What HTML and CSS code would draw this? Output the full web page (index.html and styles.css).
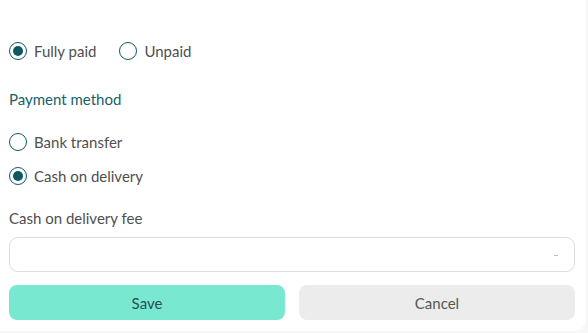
FILE: index.html
```html
<!DOCTYPE html>
<html>
<head>
<meta charset="utf-8">
<link rel="stylesheet" href="styles.css">
</head>
<body>
<div class="card">
  <div class="row-inline">
    <label class="radio"><span class="dot checked"></span><span class="txt">Fully paid</span></label>
    <label class="radio"><span class="dot"></span><span class="txt">Unpaid</span></label>
  </div>
  <div class="section">Payment method</div>
  <label class="radio stack"><span class="dot"></span><span class="txt">Bank transfer</span></label>
  <label class="radio stack second"><span class="dot checked"></span><span class="txt">Cash on delivery</span></label>
  <div class="field-label">Cash on delivery fee</div>
  <div class="input"><span class="dash"></span></div>
  <div class="buttons">
    <button class="btn save">Save</button>
    <button class="btn cancel">Cancel</button>
  </div>
</div>
</body>
</html>
```

FILE: styles.css
```css
html, body { margin: 0; padding: 0; }
body {
  background: #f7f7f7;
  width: 588px;
  height: 333px;
  overflow: hidden;
  font-family: Lato, "Noto Sans", sans-serif;
  font-size: 15px;
  color: #4f4f4f;
}
.card {
  background: #fff;
  width: 586px;
  height: 331px;
  border-radius: 0 0 12px 0;
  box-sizing: border-box;
  padding: 42px 11px 0 9px;
}
.row-inline { display: flex; gap: 23px; height: 18px; }
.radio { display: flex; align-items: center; gap: 7px; height: 18px; }
.dot {
  width: 18px; height: 18px;
  box-sizing: border-box;
  border: 1.5px solid #0d5963;
  border-radius: 50%;
  display: flex; align-items: center; justify-content: center;
  flex: none;
}
.dot.checked::after {
  content: "";
  width: 10px; height: 10px; border-radius: 50%;
  background: #0d5963;
}
.txt { line-height: 18px; }
.section {
  color: #18616b;
  margin-top: 30px;
  line-height: 18px;
}
.stack { margin-top: 25px; }
.stack.second { margin-top: 16px; }
.field-label { margin-top: 24px; line-height: 18px; }
.input {
  margin-top: 10px;
  height: 35px;
  box-sizing: border-box;
  border: 1px solid #dddddd;
  border-radius: 9px;
  display: flex; align-items: center; justify-content: flex-end;
  padding-right: 16px;
}
.dash { width: 4px; height: 1px; background: #bbb; margin-top: 2px; }
.buttons {
  display: flex; gap: 14px; margin-top: 13px;
}
.btn {
  flex: 1;
  height: 35px;
  border: none;
  border-radius: 8px;
  font-family: Lato, "Noto Sans", sans-serif;
  font-size: 15px;
  padding: 0;
}
.save { background: #78e8d1; color: #2b4d55; }
.cancel { background: #ececec; color: #555; }
```
